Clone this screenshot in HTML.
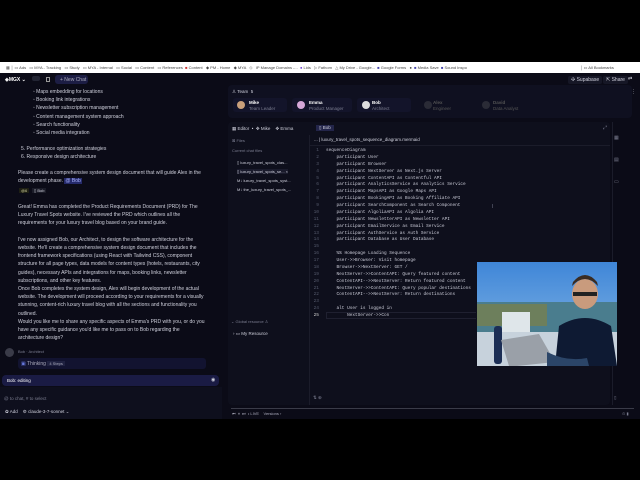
<!DOCTYPE html>
<html><head><meta charset="utf-8"><style>
*{margin:0;padding:0;box-sizing:border-box}
body{width:640px;height:480px;background:#000;overflow:hidden;position:relative;font-family:"Liberation Sans",sans-serif;color:#d8d8e4}
.a{position:absolute;white-space:nowrap}
#bm{left:0;top:62px;width:640px;height:11px;background:#fff;font-size:4px;color:#444}
#app{left:0;top:73px;width:640px;height:346px;background:#0b0b17}
.t{font-size:5px;color:#cfd0dc}
.m{font-family:"Liberation Mono",monospace;font-size:4.4px;color:#c9cad6}
.ln{font-family:"Liberation Mono",monospace;font-size:4.5px;color:#555a6c;text-align:right;width:10px}
.dim{color:#7b7d90}
</style></head><body>
<div class="a" id="bm">
<span class="a" style="left:6px;top:3px">▦ │ ▭ Ads &nbsp; ▭ MYA - Tracking &nbsp; ▭ Study &nbsp; ▭ MYA - Internal &nbsp; ▭ Social &nbsp; ▭ Content &nbsp; ▭ References &nbsp;<b style="color:#c33">■</b> Content &nbsp; ◆ PM - Home &nbsp; ◆ MYA &nbsp; ◇ &nbsp; IP Manage Domains -... &nbsp;<b style="color:#63c">●</b> Lids &nbsp; ▷ Fathom &nbsp; △ My Drive - Google... &nbsp;<b style="color:#44a">■</b> Google Forms &nbsp; ● &nbsp;<b style="color:#44a">■</b> Media Save &nbsp;<b style="color:#44a">■</b> Sound Inspo</span>
<span class="a" style="left:580px;top:3px">│ ▭ All Bookmarks</span>
</div>
<div class="a" id="app">
<div class="a t" style="left:5px;top:4px;font-weight:bold;color:#fff">◈MGX ⌄</div>
<div class="a" style="left:32px;top:3px;width:8px;height:5px;border-radius:2px;background:#222433"></div>
<div class="a" style="left:46px;top:4px;width:4px;height:5px;border:1px solid #999"></div>
<div class="a t" style="left:55px;top:2px;width:33px;height:9px;border-radius:3px;background:#1c1d44;color:#aab;padding:2px 0 0 5px">+ New Chat</div>
<div class="a t" style="left:568px;top:3px;padding:1px 3px;background:#161726;border-radius:2px">✣ Supabase</div>
<div class="a t" style="left:603px;top:3px;padding:1px 3px;background:#161726;border-radius:2px">⇱ Share</div>
<div class="a t" style="left:628px;top:3px">⇄</div>
<div class="a t" style="left:33px;top:15px;line-height:8.2px">
◦ Maps embedding for locations<br>◦ Booking link integrations<br>◦ Newsletter subscription management<br>◦ Content management system approach<br>◦ Search functionality<br>◦ Social media integration</div>
<div class="a t" style="left:21px;top:72px;line-height:8.2px">5. Performance optimization strategies<br>6. Responsive design architecture</div>
<div class="a t" style="left:18px;top:96px;line-height:8.2px">Please create a comprehensive system design document that will guide Alex in the<br>development phase. <span style="background:#252a6a;color:#aab4ff;padding:0 1px">@ Bob</span></div>
<div class="a t" style="left:19px;top:115px;font-size:4px;background:#1e1f14;color:#cc9;padding:0 2px">@6</div>
<div class="a t" style="left:32px;top:115px;font-size:4px;background:#1b1c28;padding:0 2px">▯ Bob</div>
<div class="a t" style="left:18px;top:130px;line-height:8.2px">Great! Emma has completed the Product Requirements Document (PRD) for The<br>Luxury Travel Spots website. I've reviewed the PRD which outlines all the<br>requirements for your luxury travel blog based on your brand guide.<br><br>I've now assigned Bob, our Architect, to design the software architecture for the<br>website. He'll create a comprehensive system design document that includes the<br>frontend framework specifications (using React with Tailwind CSS), component<br>structure for all page types, data models for content types (hotels, restaurants, city<br>guides), necessary APIs and integrations for maps, booking links, newsletter<br>subscriptions, and other key features.<br>Once Bob completes the system design, Alex will begin development of the actual<br>website. The development will proceed according to your requirements for a visually<br>stunning, content-rich luxury travel blog with all the sections and functionality you<br>outlined.<br>Would you like me to share any specific aspects of Emma's PRD with you, or do you<br>have any specific guidance you'd like me to pass on to Bob regarding the<br>architecture design?</div>
<div class="a" style="left:5px;top:275px;width:9px;height:9px;border-radius:50%;background:#3a3b48"></div>
<div class="a t dim" style="left:18px;top:276px;font-size:4px">Bob · Architect</div>
<div class="a" style="left:18px;top:285px;width:188px;height:11px;background:#121330;border-radius:3px"></div>
<div class="a t" style="left:21px;top:288px;color:#aab"><span style="color:#67d">▣</span> Thinking <span style="font-size:4px;background:#1f2140;padding:0 2px">4 Steps</span></div>
<div class="a" style="left:2px;top:302px;width:217px;height:11px;background:#1a1b44;border-radius:4px"></div>
<div class="a t" style="left:7px;top:305px;font-size:4.5px;color:#fff">Bob: editing</div>
<div class="a t" style="left:211px;top:304px">◉</div>
<div class="a" style="left:0;top:314px;width:222px;height:32px;background:#0e0f1d"></div>
<div class="a t dim" style="left:4px;top:323px;font-size:4.5px">@ to chat, # to select</div>
<div class="a t" style="left:5px;top:336px;font-size:4.5px">✿ Add &nbsp;&nbsp; ⚙ claude-3-7-sonnet ⌄</div>
<div class="a" style="left:228px;top:12px;width:404px;height:33px;background:#0f1020;border-radius:4px"></div>
<div class="a t" style="left:232px;top:16px;font-size:4.5px">♙ Team &nbsp;5</div>
<div class="a t" style="left:631px;top:16px">⋮</div>
<div class="a" style="left:233px;top:25px;width:54px;height:14px;background:#13142a;border-radius:3px"></div>
<div class="a" style="left:237px;top:28px;width:8px;height:8px;border-radius:50%;background:#c9a07a"></div>
<div class="a t" style="left:249px;top:27px;font-size:4.5px;line-height:6px"><b style="color:#fff">Mike</b><br><span class="dim">Team Leader</span></div>
<div class="a" style="left:292px;top:25px;width:60px;height:14px;background:#13142a;border-radius:3px"></div>
<div class="a" style="left:297px;top:28px;width:8px;height:8px;border-radius:50%;background:#d6a8d8"></div>
<div class="a t" style="left:309px;top:27px;font-size:4.5px;line-height:6px"><b style="color:#fff">Emma</b><br><span class="dim">Product Manager</span></div>
<div class="a" style="left:357px;top:25px;width:54px;height:14px;background:#13142a;border-radius:3px"></div>
<div class="a" style="left:362px;top:28px;width:8px;height:8px;border-radius:50%;background:#ddd"></div>
<div class="a t" style="left:372px;top:27px;font-size:4.5px;line-height:6px"><b style="color:#fff">Bob</b><br><span class="dim">Architect</span></div>
<div class="a" style="left:424px;top:28px;width:8px;height:8px;border-radius:50%;background:#2a2b36"></div>
<div class="a t" style="left:433px;top:27px;font-size:4.5px;line-height:6px;color:#555"><b>Alex</b><br>Engineer</div>
<div class="a" style="left:482px;top:28px;width:8px;height:8px;border-radius:50%;background:#2a2b36"></div>
<div class="a t" style="left:493px;top:27px;font-size:4.5px;line-height:6px;color:#555"><b>David</b><br>Data Analyst</div>
<div class="a" style="left:228px;top:49px;width:382px;height:283px;background:#0e0f1c;border-radius:4px"></div>
<div class="a t" style="left:232px;top:53px;font-size:4.5px">▦ Editor &nbsp;• &nbsp;✥ Mike &nbsp;&nbsp; ✥ Emma</div>
<div class="a t" style="left:316px;top:52px;font-size:4.5px;background:#23254a;padding:0 3px">▯ Bob</div>
<div class="a t dim" style="left:603px;top:52px">⤢</div>
<div class="a t dim" style="left:232px;top:65px;font-size:4px">⊠ Files</div>
<div class="a t dim" style="left:232px;top:75px;font-size:4px">Current chat files</div>
<div class="a t" style="left:237px;top:85px;font-size:4px;line-height:9px">▯ luxury_travel_spots_clas...<br><span style="background:#1a1b2c">▯ luxury_travel_spots_se... ×</span><br>M↓ luxury_travel_spots_syst...<br>M↓ the_luxury_travel_spots_...</div>
<div class="a t dim" style="left:231px;top:246px;font-size:4px">⌄ Global resource ♙</div>
<div class="a t" style="left:233px;top:258px;font-size:4.5px">› ▭ My Resource</div>
<div class="a" style="left:309px;top:62px;width:1px;height:270px;background:#1b1c2a"></div>
<div class="a t" style="left:314px;top:64px;font-size:4.5px">... | luxury_travel_spots_sequence_diagram.mermaid</div>
<div class="a" style="left:310px;top:72px;width:300px;height:1px;background:#1b1c2a"></div>
<div class="a ln" style="left:309px;top:75px;line-height:6.87px">1<br>2<br>3<br>4<br>5<br>6<br>7<br>8<br>9<br>10<br>11<br>12<br>13<br>14<br>15<br>16<br>17<br>18<br>19<br>20<br>21<br>22<br>23<br>24<br><span style="color:#ccc">25</span></div>
<div class="a m" style="left:326px;top:75px;line-height:6.87px">sequenceDiagram<br>&nbsp;&nbsp;&nbsp;&nbsp;participant User<br>&nbsp;&nbsp;&nbsp;&nbsp;participant Browser<br>&nbsp;&nbsp;&nbsp;&nbsp;participant NextServer as Next.js Server<br>&nbsp;&nbsp;&nbsp;&nbsp;participant ContentAPI as Contentful API<br>&nbsp;&nbsp;&nbsp;&nbsp;participant AnalyticsService as Analytics Service<br>&nbsp;&nbsp;&nbsp;&nbsp;participant MapsAPI as Google Maps API<br>&nbsp;&nbsp;&nbsp;&nbsp;participant BookingAPI as Booking Affiliate API<br>&nbsp;&nbsp;&nbsp;&nbsp;participant SearchComponent as Search Component<br>&nbsp;&nbsp;&nbsp;&nbsp;participant AlgoliaAPI as Algolia API<br>&nbsp;&nbsp;&nbsp;&nbsp;participant NewsletterAPI as Newsletter API<br>&nbsp;&nbsp;&nbsp;&nbsp;participant EmailService as Email Service<br>&nbsp;&nbsp;&nbsp;&nbsp;participant AuthService as Auth Service<br>&nbsp;&nbsp;&nbsp;&nbsp;participant Database as User Database<br><br>&nbsp;&nbsp;&nbsp;&nbsp;%% Homepage Loading Sequence<br>&nbsp;&nbsp;&nbsp;&nbsp;User->>Browser: Visit homepage<br>&nbsp;&nbsp;&nbsp;&nbsp;Browser->>NextServer: GET /<br>&nbsp;&nbsp;&nbsp;&nbsp;NextServer->>ContentAPI: Query featured content<br>&nbsp;&nbsp;&nbsp;&nbsp;ContentAPI-->>NextServer: Return featured content<br>&nbsp;&nbsp;&nbsp;&nbsp;NextServer->>ContentAPI: Query popular destinations<br>&nbsp;&nbsp;&nbsp;&nbsp;ContentAPI-->>NextServer: Return destinations<br><br>&nbsp;&nbsp;&nbsp;&nbsp;alt User is logged in<br>&nbsp;&nbsp;&nbsp;&nbsp;&nbsp;&nbsp;&nbsp;&nbsp;NextServer->>Con</div>
<div class="a" style="left:326px;top:239px;width:150px;height:7px;border:1px solid #1f2030;border-right:0"></div>
<div class="a t dim" style="left:492px;top:131px">I</div>
<div class="a t dim" style="left:313px;top:322px;font-size:4.5px">⇅ ⊕</div>
<div class="a t dim" style="left:614px;top:322px;font-size:4.5px">▯</div>
<div class="a t dim" style="left:614px;top:54px;font-size:5px;line-height:22px">▦<br>▤<br>▭</div>
<div class="a" style="left:612px;top:49px;width:1px;height:283px;background:#1b1c2a"></div>
<div class="a" style="left:231px;top:335px;width:403px;height:1px;background:#3a3b48"></div>
<div class="a t" style="left:232px;top:338px;font-size:4px;color:#aab">⏮ &nbsp;⏸ &nbsp;⏭ &nbsp;• LIVE &nbsp;&nbsp; Versions ›</div>
<div class="a t dim" style="left:622px;top:338px;font-size:4px">⊙ ▮</div>
<svg class="a" style="left:477px;top:189px" width="140" height="104" viewBox="0 0 140 104">
<defs><linearGradient id="sky" x1="0" y1="0" x2="0" y2="1"><stop offset="0" stop-color="#3f86d8"/><stop offset="1" stop-color="#8fbde6"/></linearGradient></defs>
<rect width="140" height="104" fill="url(#sky)"/>
<rect y="40" width="140" height="30" fill="#4a7d8e"/>
<rect y="42" width="70" height="22" fill="#6d7f5c"/>
<rect x="25" y="50" width="28" height="30" fill="#dfe6ea"/>
<rect y="70" width="140" height="34" fill="#c7d2dc"/>
<rect x="17" y="64" width="8" height="38" rx="3" fill="#1c2e55"/>
<polygon points="24,78 62,72 78,100 40,104 32,104" fill="#9aa0a8"/>
<ellipse cx="108" cy="32" rx="13" ry="15" fill="#c99b7d"/>
<path d="M95,24 Q108,10 121,24 L120,20 Q108,6 96,20Z" fill="#3a2c22"/>
<rect x="96" y="30" width="24" height="4" fill="#222"/>
<path d="M78,104 L82,64 Q108,48 134,64 L140,104Z" fill="#0e1a33"/>
<path d="M70,90 Q90,100 110,96 L112,104 L70,104Z" fill="#2b4568"/>
</svg>
</div>
</body></html>
